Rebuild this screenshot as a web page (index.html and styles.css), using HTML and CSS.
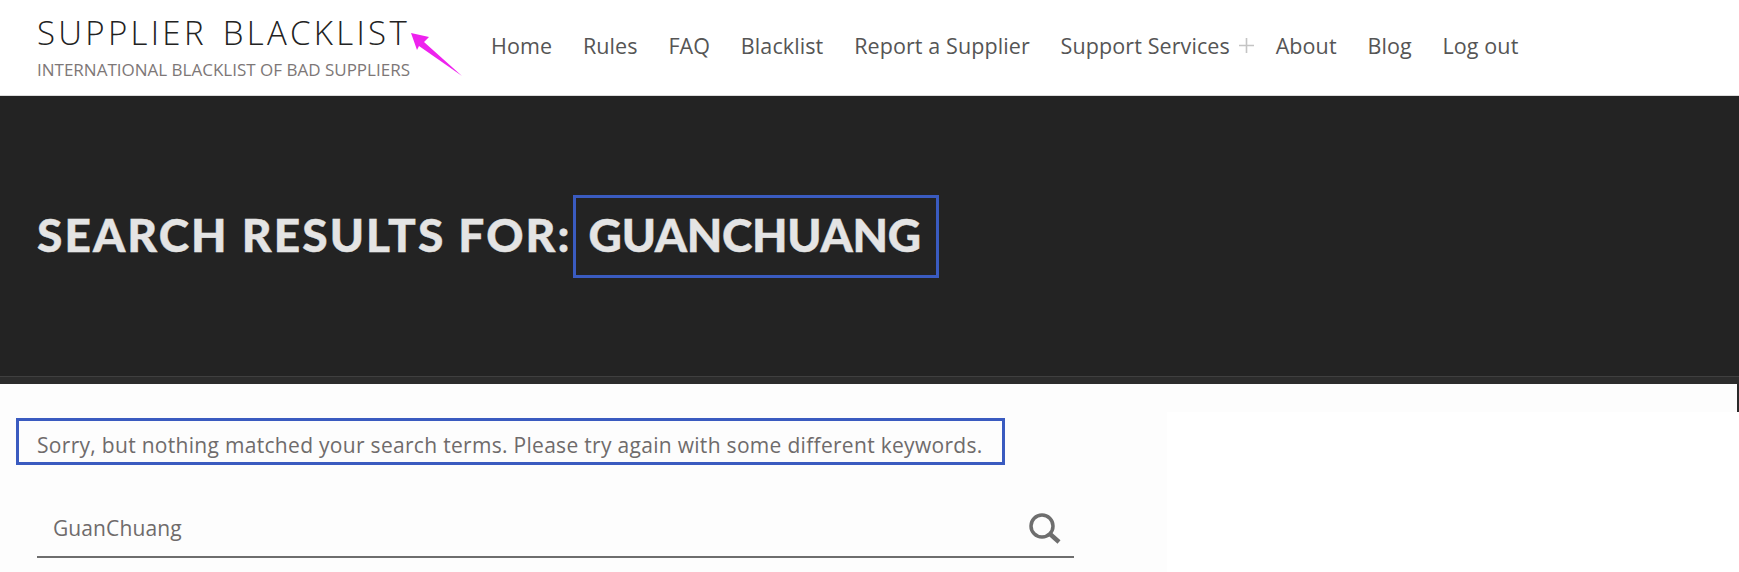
FILE: index.html
```html
<!DOCTYPE html>
<html lang="en">
<head>
<meta charset="utf-8">
<title>Search results for: GuanChuang</title>
<link rel="stylesheet" href="styles.css">
</head>
<body>
<header class="site-header">
  <div class="brand">
    <div class="brand-title">SUPPLIER BLACKLIST</div>
    <div class="brand-tagline">INTERNATIONAL BLACKLIST OF BAD SUPPLIERS</div>
  </div>
  <svg class="arrow" width="60" height="50" viewBox="0 0 60 50"><polygon points="1,1 19,5 14,10 52,44 9,14 7,18" fill="#ee22ee"/></svg>
  <nav class="main-nav">
    <a>Home</a>
    <a>Rules</a>
    <a>FAQ</a>
    <a>Blacklist</a>
    <a>Report a Supplier</a>
    <a class="has-sub">Support Services<svg class="plus" width="15" height="15" viewBox="0 0 15 15"><path d="M7.5 0v15M0 7.5h15" stroke="#c4c4c4" stroke-width="1.6"/></svg></a>
    <a>About</a>
    <a>Blog</a>
    <a>Log out</a>
  </nav>
</header>
<section class="hero">
  <h1 class="hero-title">SEARCH RESULTS FOR:<span class="hero-term">GUANCHUANG</span></h1>
</section>
<div class="hero-band"></div>
<div class="page">
  <main class="content">
    <p class="no-results">Sorry, but nothing matched your search terms. Please try again with some different keywords.</p>
    <form class="search">
      <span class="search-value">GuanChuang</span>
      <svg class="search-icon" width="32" height="32" viewBox="0 0 32 32"><circle cx="13" cy="13" r="11" fill="none" stroke="#6e6e6e" stroke-width="3.5"/><path d="M21 21l9 8" stroke="#6e6e6e" stroke-width="4.5"/></svg>
    </form>
  </main>
  <aside class="sidebar"></aside>
  <div class="edge"></div>
</div>
</body>
</html>
```
FILE: styles.css
```css
* { box-sizing: border-box; }
html, body { margin: 0; padding: 0; }
body {
  height: 572px;
  overflow: hidden;
  background: #fff;
  font-family: "Open Sans", "Noto Sans", sans-serif;
}
.site-header {
  position: relative;
  display: flex;
  align-items: flex-start;
  height: 96px;
  padding-left: 37px;
  border-bottom: 1px solid #dcdcdc;
}
.brand { width: 454px; flex: none; padding-top: 13px; }
.brand-title {
  font-weight: 300;
  font-size: 33px;
  line-height: 40px;
  letter-spacing: 3.3px;
  word-spacing: 4px;
  color: #222;
  white-space: nowrap;
}
.brand-tagline {
  font-size: 17px;
  line-height: 22px;
  margin-top: 6px;
  color: #7d7777;
  white-space: nowrap;
}
.arrow { position: absolute; left: 410px; top: 32px; }
.main-nav {
  display: flex;
  align-items: center;
  gap: 30.75px;
  height: 90px;
  font-size: 21.5px;
  letter-spacing: 0.1px;
  color: #555;
  white-space: nowrap;
}
.has-sub { display: flex; align-items: center; gap: 9px; margin-right: -9px; }
.plus { flex: none; }
.hero {
  display: flex;
  align-items: center;
  height: 281px;
  padding-left: 37px;
  background: #232323;
  border-bottom: 1px solid #3f3f3f;
}
.hero-title {
  display: flex;
  align-items: flex-start;
  margin: 0;
  font-family: Lato, "Open Sans", sans-serif;
  font-size: 46px;
  line-height: 80px;
  font-weight: 900;
  letter-spacing: 2.08px;
  -webkit-text-stroke: 0.4px #e4e4e4;
  color: #e4e4e4;
  white-space: nowrap;
}
.hero-term {
  height: 83px;
  line-height: 74px;
  border: 3px solid #3a5bc0;
  padding: 0 15px 0 13px;
  margin-left: 1px;
  letter-spacing: -0.3px;
}
.hero-band { height: 7px; background: #2c2c2c; }
.page { position: relative; display: flex; height: 188px; }
.content { width: 1167px; flex: none; background: #fdfdfd; padding-top: 34px; }
.sidebar { flex: 1; margin-top: 28px; background: #fff; box-shadow: 0 -28px 0 #fdfdfd; }
.edge { position: absolute; right: 0; top: 0; width: 2px; height: 28px; background: #2a2a2a; }
.no-results {
  width: 989px;
  height: 47px;
  margin: 0 0 0 16px;
  padding-left: 18px;
  border: 3px solid #3a5bc0;
  font-size: 21px;
  line-height: 48px;
  letter-spacing: 0.3px;
  color: #6f6b6b;
  white-space: nowrap;
}
.search {
  display: flex;
  align-items: center;
  justify-content: space-between;
  width: 1037px;
  height: 58px;
  margin: 35px 0 0 37px;
  padding: 0 13px 0 16px;
  border-bottom: 2px solid #6e6e6e;
}
.search-value { font-size: 21px; letter-spacing: 0.1px; color: #6f6b6b; }
.search-icon { flex: none; margin-top: 2px; }
```
